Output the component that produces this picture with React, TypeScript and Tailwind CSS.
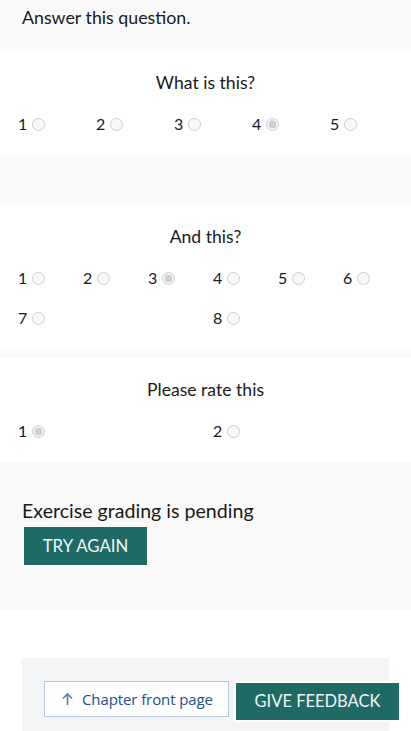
import { ReactNode } from 'react';

type Question = {
    title: string;
    rows: number[][];
    cols: string[];
    checked: number;
};

const questions: Question[] = [
    { title: 'What is this?', rows: [[1, 2, 3, 4, 5]], cols: ['grid-cols-5'], checked: 4 },
    { title: 'And this?', rows: [[1, 2, 3, 4, 5, 6], [7, 8]], cols: ['grid-cols-6', 'grid-cols-2'], checked: 3 },
    { title: 'Please rate this', rows: [[1, 2]], cols: ['grid-cols-2'], checked: 1 },
];

function Option({ n, checked, name }: { n: number; checked: boolean; name: string }) {
    return (
        <label className="flex items-center h-[40px] text-[16px] text-[#1a1a1a]">
            <span>{n}</span>
            <input
                type="radio"
                name={name}
                disabled
                defaultChecked={checked}
                className="ml-[5px] w-[13px] h-[13px] m-0"
            />
        </label>
    );
}

function QuestionBlock({ q, idx }: { q: Question; idx: number }) {
    return (
        <section className="bg-white pt-5 pb-[11px]">
            <h2 className="text-center text-[17.6px] leading-[24px] text-[#1a1a1a]">{q.title}</h2>
            <div className="mt-[9px] pl-[18px] w-[408px]">
                {q.rows.map((row, i) => (
                    <div key={i} className={`grid ${q.cols[i]}`}>
                        {row.map((n) => (
                            <Option key={n} n={n} checked={n === q.checked} name={`q${idx}`} />
                        ))}
                    </div>
                ))}
            </div>
        </section>
    );
}

function Spacer({ h }: { h: string }): ReactNode {
    return <div className={`bg-[#f9f9f9] ${h}`} />;
}

export default function App() {
    return (
        <div className="min-h-screen bg-white" style={{ fontFamily: 'Lato, "Open Sans", sans-serif' }}>
            {/* cabecera de la tarea */}
            <div className="bg-[#f9f9f9] h-[51px] px-[22px] pt-[5px]">
                <p className="text-[17.8px] leading-[24px] text-[#1a1a1a]">Answer this question.</p>
            </div>

            <QuestionBlock q={questions[0]} idx={0} />
            <Spacer h="h-[50px]" />
            <QuestionBlock q={questions[1]} idx={1} />
            <Spacer h="h-[9px]" />
            <QuestionBlock q={questions[2]} idx={2} />

            {/* estado de la calificación */}
            <div className="bg-[#f9f9f9] h-[148px] px-[22px] pt-[36px]">
                <p className="text-[19.6px] leading-[26px] text-[#1a1a1a]">Exercise grading is pending</p>
                <button className="ml-[2px] mt-[3px] h-[38px] w-[123px] bg-[#1f6a64] text-[#f0f6f5] text-[16.8px] uppercase">
                    Try again
                </button>
            </div>

            {/* navegación inferior */}
            <div className="pt-[48px] px-[22px]">
                <div className="bg-[#f3f4f6] w-[367px] h-[80px] pl-[22px] pt-[23px] flex items-start gap-[5px]">
                    <button
                        className="shrink-0 flex items-center gap-[8px] h-[36px] w-[185px] pl-[16px] bg-white border border-[#b5c6d8] text-[#1c4f8c] text-[15px]"
                        style={{ fontFamily: '"Open Sans", Lato, sans-serif' }}
                    >
                        <svg width="13" height="14" viewBox="0 0 13 14" fill="none" stroke="#5b7fa4" strokeWidth="1.6">
                            <path d="M6.5 13V2M2 6.5L6.5 2l4.5 4.5" />
                        </svg>
                        <span className="tracking-[-0.1px]">Chapter front page</span>
                    </button>
                    <div className="shrink-0 bg-white p-[2px]">
                        <button className="h-[37px] w-[163px] bg-[#1f6a64] text-[#f0f6f5] text-[16.5px] uppercase">
                            Give feedback
                        </button>
                    </div>
                </div>
            </div>
        </div>
    );
}
